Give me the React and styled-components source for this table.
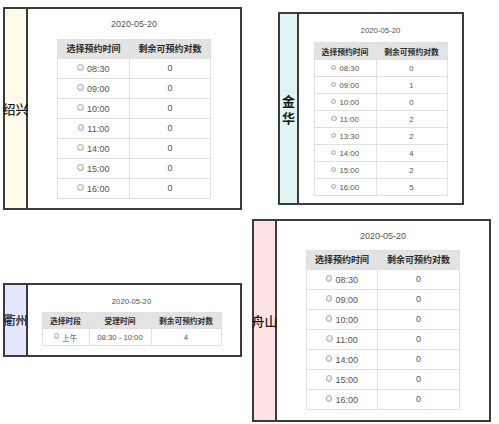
import styled, { createGlobalStyle } from 'styled-components';

const GlobalStyle = createGlobalStyle`
  html, body {
    margin: 0;
    padding: 0;
    background: #fff;
  }
  body {
    font-family: "Liberation Sans", "Noto Sans CJK SC", sans-serif;
    width: 499px;
    height: 424px;
    overflow: hidden;
  }
`;

const times = [
  { t: '08:30', n: 0 },
  { t: '09:00', n: 0 },
  { t: '10:00', n: 0 },
  { t: '11:00', n: 0 },
  { t: '14:00', n: 0 },
  { t: '15:00', n: 0 },
  { t: '16:00', n: 0 },
];

const jinhua = [
  { t: '08:30', n: 0 },
  { t: '09:00', n: 1 },
  { t: '10:00', n: 0 },
  { t: '11:00', n: 2 },
  { t: '13:30', n: 2 },
  { t: '14:00', n: 4 },
  { t: '15:00', n: 2 },
  { t: '16:00', n: 5 },
];

function Panel({ city, bg, wrap, w, h, m, size, rowH, headH, cols, headers, rows, padTop, gapDate, shift }) {
  return (
    <Card $w={w} $h={h} $m={m}>
      <Label $bg={bg} $wrap={wrap} $lw={wrap ? 17 : 21} $fs={city.fs}>
        <span>{city.name}</span>
      </Label>
      <Body $pt={padTop} $shift={shift}>
        <DateText $fs={size}>2020-05-20</DateText>
        <Table $fs={size} $mt={gapDate}>
          <colgroup>
            {cols.map((c, i) => (
              <col key={i} style={{ width: c }} />
            ))}
          </colgroup>
          <thead>
            <HeadRow $h={headH}>
              {headers.map((hd) => (
                <th key={hd}>{hd}</th>
              ))}
            </HeadRow>
          </thead>
          <tbody>
            {rows.map((r, i) => (
              <Row key={i} $h={rowH}>
                {r.map((cell, j) => (
                  <td key={j}>
                    {j === 0 ? (
                      <Choice>
                        <Radio $d={size < 9 ? 5.5 : 6.5} />
                        {cell}
                      </Choice>
                    ) : (
                      cell
                    )}
                  </td>
                ))}
              </Row>
            ))}
          </tbody>
        </Table>
      </Body>
    </Card>
  );
}

export default function App() {
  return (
    <>
      <GlobalStyle />
      <Canvas>
        <Line $mt={7}>
          <Panel
            city={{ name: '绍兴', fs: 13 }}
            bg="#fffde9"
            w={239}
            h={203}
            m="0 0 0 3px"
            size={9}
            rowH={20}
            headH={19}
            padTop={10}
            gapDate={9}
            cols={[72, 81]}
            headers={['选择预约时间', '剩余可预约对数']}
            rows={times.map((r) => [r.t, r.n])}
          />
          <Panel
            city={{ name: '金华', fs: 13 }}
            bg="#dff4f3"
            wrap
            w={186}
            h={193}
            m="5px 0 0 36px"
            size={7.8}
            rowH={17}
            headH={17}
            padTop={12}
            gapDate={7}
            cols={[62, 71]}
            headers={['选择预约时间', '剩余可预约对数']}
            rows={jinhua.map((r) => [r.t, r.n])}
          />
        </Line>
        <Line $mt={9}>
          <Panel
            city={{ name: '衢州', fs: 12 }}
            bg="#e5e7ff"
            w={239}
            h={74}
            m="64px 0 0 3px"
            size={7.7}
            rowH={17}
            headH={16}
            padTop={12}
            gapDate={6}
            shift={5}
            cols={[47, 62, 70]}
            headers={['选择时段', '受理时间', '剩余可预约对数']}
            rows={[['上午', '08:30 - 10:00', 4]]}
          />
          <Panel
            city={{ name: '舟山', fs: 13 }}
            bg="#fde3e3"
            w={239}
            h={203}
            m="0 0 0 10px"
            size={9}
            rowH={20}
            headH={19}
            padTop={10}
            gapDate={8}
            cols={[71, 82]}
            headers={['选择预约时间', '剩余可预约对数']}
            rows={times.map((r) => [r.t, r.n])}
          />
        </Line>
      </Canvas>
    </>
  );
}

const Canvas = styled.div`
  display: flex;
  flex-direction: column;
`;

const Line = styled.div`
  display: flex;
  align-items: flex-start;
  margin-top: ${(p) => p.$mt}px;
`;

const Card = styled.div`
  box-sizing: border-box;
  display: flex;
  width: ${(p) => p.$w}px;
  height: ${(p) => p.$h}px;
  margin: ${(p) => p.$m};
  border: 2px solid #3b3b3b;
  background: #fff;
`;

const Label = styled.div`
  flex: none;
  position: relative;
  z-index: 1;
  width: ${(p) => p.$lw}px;
  background: ${(p) => p.$bg};
  border-right: 2px solid #3b3b3b;
  display: flex;
  align-items: center;
  justify-content: center;
  font-family: "Noto Sans CJK SC", sans-serif;
  font-size: ${(p) => p.$fs}px;
  color: #1a1a1a;
  line-height: ${(p) => (p.$wrap ? '17px' : '1')};
  white-space: ${(p) => (p.$wrap ? 'normal' : 'nowrap')};
  text-align: center;

  span {
    width: ${(p) => (p.$wrap ? '13px' : 'auto')};
    font-weight: ${(p) => (p.$wrap ? 700 : 500)};
  }
`;

const Body = styled.div`
  flex: 1;
  display: flex;
  flex-direction: column;
  align-items: center;
  padding-top: ${(p) => p.$pt}px;
  padding-right: ${(p) => p.$shift || 0}px;
`;

const DateText = styled.div`
  font-size: ${(p) => p.$fs}px;
  line-height: 1.2;
  color: #555;
`;

const Table = styled.table`
  margin-top: ${(p) => p.$mt}px;
  border-collapse: collapse;
  table-layout: fixed;
  font-size: ${(p) => p.$fs}px;
  color: #555;

  th,
  td {
    border: 1px solid #e0e0e0;
    padding: 0;
    text-align: center;
    vertical-align: middle;
    white-space: nowrap;
  }

  th {
    background: #e3e3e3;
    color: #2b2b2b;
    font-weight: 700;
    font-family: "Noto Sans CJK SC", sans-serif;
  }
`;

const HeadRow = styled.tr`
  height: ${(p) => p.$h}px;
`;

const Row = styled.tr`
  height: ${(p) => p.$h}px;
`;

const Choice = styled.span`
  display: inline-flex;
  align-items: center;
  gap: 3px;
`;

const Radio = styled.span`
  display: inline-block;
  box-sizing: border-box;
  width: ${(p) => p.$d}px;
  height: ${(p) => p.$d}px;
  border-radius: 50%;
  border: 1px solid #b0b0b0;
  background: radial-gradient(circle at 40% 35%, #fafafa, #d4d4d4);
  margin-top: -3px;
`;
